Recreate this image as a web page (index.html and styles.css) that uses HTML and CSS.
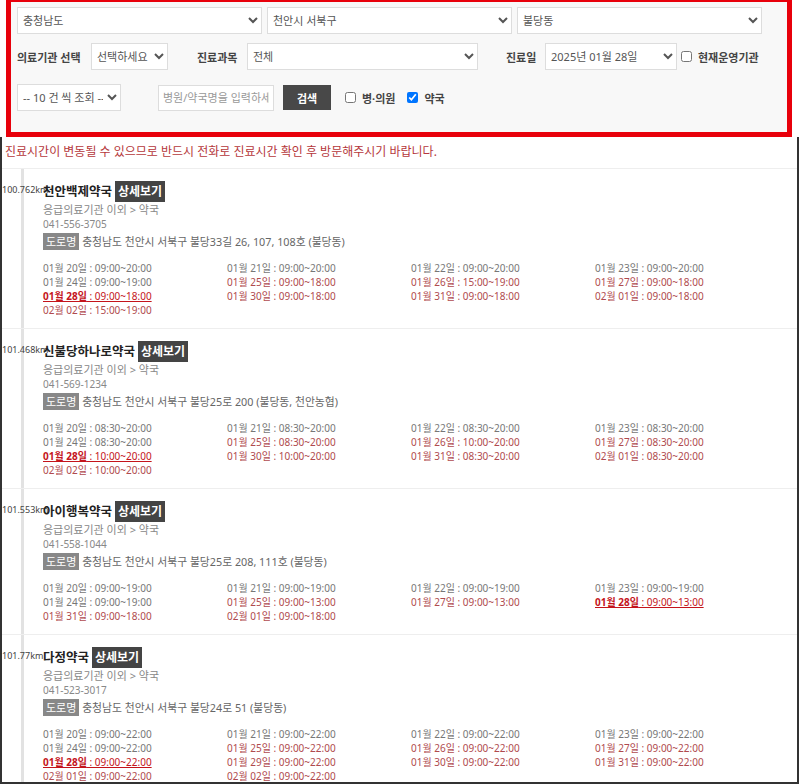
FILE: index.html
```html
<!DOCTYPE html>
<html lang="ko">
<head>
    <meta charset="UTF-8">
    <meta name="viewport" content="width=device-width, initial-scale=1.0">
    <title>진료기관 조회</title>
    <link rel="stylesheet" href="styles.css">
</head>
<body>

<form class="search" id="searchForm">
    <div class="row row-area">
        <select><option>충청남도</option></select>
        <select><option>천안시 서북구</option></select>
        <select><option>불당동</option></select>
    </div>

    <div class="row row-filter">
        <label class="lbl lbl-type">의료기관 선택</label>
        <select class="sel-type"><option>선택하세요</option></select>
        <label class="lbl lbl-dept">진료과목</label>
        <select class="sel-dept"><option>전체</option></select>
        <label class="lbl lbl-date">진료일</label>
        <select class="sel-date"><option>2025년 01월 28일</option></select>
        <input type="checkbox" id="nowOpen" class="chk chk-now">
        <label for="nowOpen" class="lbl-chk">현재운영기관</label>
    </div>

    <div class="row row-keyword">
        <select class="sel-count"><option>-- 10 건 씩 조회 --</option></select>
        <input type="text" class="keyword" placeholder="병원/약국명을 입력하세요">
        <button type="submit" class="btn-search">검색</button>
        <input type="checkbox" id="hospital" class="chk chk-hosp">
        <label for="hospital" class="lbl-chk">병·의원</label>
        <input type="checkbox" id="pharmacy" class="chk chk-pharm" checked>
        <label for="pharmacy" class="lbl-chk">약국</label>
    </div>
</form>

<div class="frame">
    <p class="notice">진료시간이 변동될 수 있으므로 반드시 전화로 진료시간 확인 후 방문해주시기 바랍니다.</p>

    <ul class="list">
        <li class="item">
            <div class="title"><span class="dist">100.762km</span><strong class="name">천안백제약국</strong> <a class="detail" href="#">상세보기</a></div>
            <p class="cate">응급의료기관 이외 &gt; 약국</p>
            <p class="tel">041-556-3705</p>
            <p class="addr"><span class="road">도로명</span> 충청남도 천안시 서북구 불당33길 26, 107, 108호 (불당동)</p>
            <ul class="hours">
                <li>01월 20일 : 09:00~20:00</li>
                <li>01월 21일 : 09:00~20:00</li>
                <li>01월 22일 : 09:00~20:00</li>
                <li>01월 23일 : 09:00~20:00</li>
                <li>01월 24일 : 09:00~19:00</li>
                <li class="off">01월 25일 : 09:00~18:00</li>
                <li class="off">01월 26일 : 15:00~19:00</li>
                <li class="off">01월 27일 : 09:00~18:00</li>
                <li class="today"><b>01월 28일</b> : 09:00~18:00</li>
                <li class="off">01월 30일 : 09:00~18:00</li>
                <li class="off">01월 31일 : 09:00~18:00</li>
                <li class="off">02월 01일 : 09:00~18:00</li>
                <li class="off">02월 02일 : 15:00~19:00</li>
            </ul>
        </li>

        <li class="item">
            <div class="title"><span class="dist">101.468km</span><strong class="name">신불당하나로약국</strong> <a class="detail" href="#">상세보기</a></div>
            <p class="cate">응급의료기관 이외 &gt; 약국</p>
            <p class="tel">041-569-1234</p>
            <p class="addr"><span class="road">도로명</span> 충청남도 천안시 서북구 불당25로 200 (불당동, 천안농협)</p>
            <ul class="hours">
                <li>01월 20일 : 08:30~20:00</li>
                <li>01월 21일 : 08:30~20:00</li>
                <li>01월 22일 : 08:30~20:00</li>
                <li>01월 23일 : 08:30~20:00</li>
                <li>01월 24일 : 08:30~20:00</li>
                <li class="off">01월 25일 : 08:30~20:00</li>
                <li class="off">01월 26일 : 10:00~20:00</li>
                <li class="off">01월 27일 : 08:30~20:00</li>
                <li class="today"><b>01월 28일</b> : 10:00~20:00</li>
                <li class="off">01월 30일 : 10:00~20:00</li>
                <li class="off">01월 31일 : 08:30~20:00</li>
                <li class="off">02월 01일 : 08:30~20:00</li>
                <li class="off">02월 02일 : 10:00~20:00</li>
            </ul>
        </li>

        <li class="item">
            <div class="title"><span class="dist">101.553km</span><strong class="name">아이행복약국</strong> <a class="detail" href="#">상세보기</a></div>
            <p class="cate">응급의료기관 이외 &gt; 약국</p>
            <p class="tel">041-558-1044</p>
            <p class="addr"><span class="road">도로명</span> 충청남도 천안시 서북구 불당25로 208, 111호 (불당동)</p>
            <ul class="hours">
                <li>01월 20일 : 09:00~19:00</li>
                <li>01월 21일 : 09:00~19:00</li>
                <li>01월 22일 : 09:00~19:00</li>
                <li>01월 23일 : 09:00~19:00</li>
                <li>01월 24일 : 09:00~19:00</li>
                <li class="off">01월 25일 : 09:00~13:00</li>
                <li class="off">01월 27일 : 09:00~13:00</li>
                <li class="today"><b>01월 28일</b> : 09:00~13:00</li>
                <li class="off">01월 31일 : 09:00~18:00</li>
                <li class="off">02월 01일 : 09:00~18:00</li>
            </ul>
        </li>

        <li class="item">
            <div class="title"><span class="dist">101.77km</span><strong class="name">다정약국</strong> <a class="detail" href="#">상세보기</a></div>
            <p class="cate">응급의료기관 이외 &gt; 약국</p>
            <p class="tel">041-523-3017</p>
            <p class="addr"><span class="road">도로명</span> 충청남도 천안시 서북구 불당24로 51 (불당동)</p>
            <ul class="hours">
                <li>01월 20일 : 09:00~22:00</li>
                <li>01월 21일 : 09:00~22:00</li>
                <li>01월 22일 : 09:00~22:00</li>
                <li>01월 23일 : 09:00~22:00</li>
                <li>01월 24일 : 09:00~22:00</li>
                <li class="off">01월 25일 : 09:00~22:00</li>
                <li class="off">01월 26일 : 09:00~22:00</li>
                <li class="off">01월 27일 : 09:00~22:00</li>
                <li class="today"><b>01월 28일</b> : 09:00~22:00</li>
                <li class="off">01월 29일 : 09:00~22:00</li>
                <li class="off">01월 30일 : 09:00~22:00</li>
                <li class="off">01월 31일 : 09:00~22:00</li>
                <li class="off">02월 01일 : 09:00~22:00</li>
                <li class="off">02월 02일 : 09:00~22:00</li>
            </ul>
        </li>
    </ul>
</div>

</body>
</html>
```

FILE: styles.css
```css
body {
    margin: 0;
    padding: 0;
    width: 800px;
    height: 784px;
    overflow: hidden;
    background-color: #fff;
    font-family: "Noto Sans", "Noto Sans CJK KR", sans-serif;
    font-size: 11px;
    color: #555;
}
p, ul {
    margin: 0;
    padding: 0;
    list-style: none;
}

/* search panel (red outline) */
.search {
    box-sizing: border-box;
    width: 786px;
    height: 137px;
    margin-left: 6px;
    padding: 5px 0 0 6px;
    border: 5px solid #e8000b;
    border-top-width: 2px;
    background-color: #f8f8f8;
}
.row {
    display: flex;
    align-items: center;
}
.row-area {
    display: grid;
    grid-template-columns: repeat(3, 245px);
    gap: 5px;
}
.row-filter {
    margin-top: 9px;
}
.row-keyword {
    margin-top: 14px;
}
select, .keyword {
    box-sizing: border-box;
    height: 27px;
    padding: 0 1px;
    border: 1px solid #ddd;
    border-radius: 0;
    background-color: #fff;
    font-family: inherit;
    font-size: 11px;
    color: #555;
}
.lbl {
    font-weight: bold;
    color: #444;
}
.lbl-type { width: 74px; }
.sel-type { width: 77px; }
.lbl-dept { width: 50px; margin-left: 29px; }
.sel-dept { width: 231px; }
.lbl-date { width: 39px; margin-left: 28px; }
.sel-date { width: 132px; }
.chk {
    width: 11px;
    height: 11px;
    margin: 0;
}
.chk-now { margin-left: 4px; }
.lbl-chk {
    margin-left: 6px;
    font-weight: bold;
    color: #444;
}
.sel-count { width: 104px; }
.keyword {
    width: 116px;
    margin-left: 37px;
    height: 26px;
    padding: 0 4px;
}
.keyword::placeholder {
    color: #999;
}
.btn-search {
    width: 48px;
    height: 25px;
    margin-left: 9px;
    border: 0;
    background-color: #484848;
    color: #fff;
    font-family: inherit;
    font-size: 11px;
    font-weight: bold;
    cursor: pointer;
}
.chk-hosp { margin-left: 14px; }
.chk-pharm { margin-left: 12px; }

/* result frame */
.frame {
    box-sizing: border-box;
    width: 799px;
    height: 647px;
    overflow: hidden;
    border: 2px solid #333;
    border-top: 0;
}
.notice {
    height: 16px;
    padding: 7px 0 8px 3px;
    line-height: 16px;
    font-size: 12px;
    color: #b5373b;
}
.list {
    background: linear-gradient(#e2e2e2, #e2e2e2) no-repeat 19px 0 / 3px 100%;
}
.item {
    padding: 12px 0 11px 41px;
    border-top: 1px solid #eee;
}
.title {
    height: 21px;
    line-height: 21px;
    white-space: nowrap;
}
.dist {
    display: inline-block;
    width: 41px;
    margin-left: -41px;
    font-size: 9px;
    color: #444;
    vertical-align: top;
    line-height: 18px;
}
.name {
    font-size: 12.5px;
    color: #222;
}
.detail {
    padding: 2px 3px;
    background-color: #444;
    color: #fff;
    font-size: 12px;
    font-weight: bold;
    text-decoration: none;
}
.cate, .tel {
    height: 14px;
    line-height: 14px;
    color: #888;
}
.cate {
    margin-top: 1px;
}
.tel {
    font-size: 10px;
}
.addr {
    height: 18px;
    margin-top: 2px;
    line-height: 18px;
    font-size: 10.8px;
    color: #666;
}
.road {
    display: inline-block;
    padding: 0 3px;
    background-color: #888;
    color: #fff;
    font-size: 11px;
    line-height: 17px;
    vertical-align: top;
}
.hours {
    display: grid;
    grid-template-columns: repeat(4, 184px);
    margin-top: 10px;
}
.hours li {
    height: 14px;
    line-height: 14px;
    font-size: 10px;
    color: #777;
    white-space: nowrap;
}
.hours .off {
    color: #b04a4e;
}
.hours .today {
    color: #c4141b;
    text-decoration: underline;
}
```
